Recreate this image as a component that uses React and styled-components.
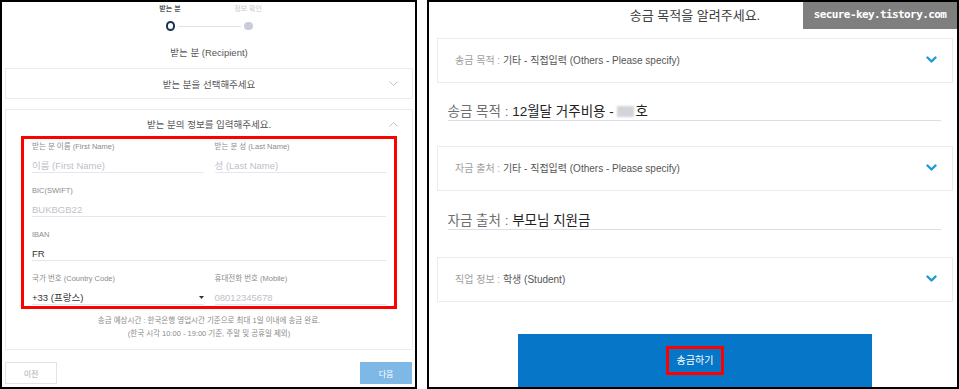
import styled, { createGlobalStyle } from 'styled-components';

const Global = createGlobalStyle`
  html, body { margin: 0; padding: 0; background: #fff; }
  body { font-family: "Liberation Sans", "Noto Sans CJK KR", sans-serif; }
  * { box-sizing: border-box; }
`;

const Page = styled.div`
  display: flex;
  gap: 10px;
  width: 959px;
  height: 389px;
`;

const Panel = styled.div`
  position: relative;
  width: ${p => p.$w}px;
  height: 389px;
  border: 2px solid #000;
  overflow: hidden;
  padding: ${p => p.$pad};
`;

/* ---------- left: stepper ---------- */
const StepLabels = styled.div`
  display: flex;
  justify-content: center;
  padding-top: 2px;
`;

const StepLabel = styled.div`
  width: 78px;
  text-align: center;
  font-size: 7px;
  line-height: 10px;
  font-weight: ${p => (p.$active ? 700 : 400)};
  color: ${p => (p.$active ? '#555' : '#c8c8d0')};
`;

const StepTrack = styled.div`
  display: flex;
  align-items: center;
  justify-content: center;
  gap: 3px;
  height: 10px;
  margin-top: 7px;
`;

const Dot = styled.div`
  width: ${p => (p.$active ? 9.5 : 8.5)}px;
  height: ${p => (p.$active ? 9.5 : 8.5)}px;
  border-radius: 50%;
  border: ${p => (p.$active ? '2px solid #1b3452' : 'none')};
  background: ${p => (p.$active ? '#fff' : '#c9ccdf')};
`;

const TrackLine = styled.div`
  width: 63px;
  height: 1px;
  background: #e2e2e8;
`;

const Heading = styled.div`
  margin-top: 15px;
  line-height: 14px;
  font-size: 9.5px;
  color: #555;
  text-align: center;
`;

/* ---------- left: cards ---------- */
const Card = styled.div`
  margin-top: ${p => p.$mt}px;
  border: 1px solid #ebebeb;
  background: #fff;
`;

const CardHeader = styled.div`
  display: grid;
  grid-template-columns: 30px 1fr 30px;
  align-items: center;
  height: ${p => p.$h}px;
  padding-top: ${p => p.$pt || 0}px;
  font-size: 9.5px;
  color: #555;
  text-align: center;

  svg { justify-self: end; margin-right: 14px; }
`;

const RedBox = styled.div`
  margin: 0 15px;
  border: 3px solid #ff0000;
  padding: 3px 8px 1px;
  display: grid;
  grid-template-columns: 1fr 1fr;
  gap: 13px 11px;
`;

const Field = styled.div`
  grid-column: ${p => (p.$wide ? 'span 2' : 'auto')};
`;

const FieldLabel = styled.div`
  font-size: 7.5px;
  line-height: 10px;
  color: #8c8c8c;
  white-space: nowrap;
`;

const FieldValue = styled.div`
  display: flex;
  align-items: center;
  justify-content: space-between;
  margin-top: 7px;
  height: 14px;
  line-height: 13px;
  font-size: 9.5px;
  color: ${p => (p.$filled ? '#333' : '#bfc0c8')};
  border-bottom: 1px solid #e6e6ee;
  white-space: nowrap;
`;

const Notice = styled.div`
  margin-top: 6px;
  padding-bottom: 9px;
  font-size: 7.5px;
  line-height: 12.6px;
  color: #8a8a8a;
  text-align: center;
`;

const NavRow = styled.div`
  display: flex;
  justify-content: space-between;
  margin-top: 12px;
  padding-right: 1px;
`;

const NavButton = styled.div`
  width: 52px;
  height: 22px;
  display: flex;
  align-items: center;
  justify-content: center;
  font-size: 8px;
  border: 1px solid ${p => (p.$primary ? '#7db8e6' : '#e3e3e3')};
  background: ${p => (p.$primary ? '#7db8e6' : '#fff')};
  color: ${p => (p.$primary ? '#fff' : '#aaa')};
`;

/* ---------- right panel ---------- */
const Watermark = styled.div`
  position: absolute;
  top: -2px;
  right: 0;
  width: 154px;
  height: 29px;
  background: #7f7f7f;
  color: #fff;
  display: flex;
  align-items: center;
  justify-content: center;
  font-family: "DejaVu Sans Mono", monospace;
  font-weight: 700;
  font-size: 11px;
  letter-spacing: -0.6px;
`;

const Title = styled.div`
  height: 36px;
  padding-top: 4px;
  line-height: 20px;
  font-size: 13px;
  color: #3d3d3d;
  text-align: center;
`;

const SelectCard = styled.div`
  margin-top: ${p => p.$mt}px;
  height: 45px;
  border: 1px solid #ebebeb;
  display: flex;
  align-items: center;
  justify-content: space-between;
  padding: 0 15px 3px 17px;
  font-size: 10px;
`;

const Muted = styled.span`
  color: ${p => p.$c};
`;

const InputRow = styled.div`
  margin: ${p => p.$mt}px 12px 0 10.5px;
  height: 17px;
  line-height: 16px;
  font-size: 13.5px;
  color: #222;
  border-bottom: 1px solid #dcdde8;
  white-space: nowrap;
`;

const Redacted = styled.span`
  display: inline-block;
  width: 17px;
  height: 11px;
  margin-right: 1px;
  vertical-align: -1px;
  background: #d3d4da;
  filter: blur(1px);
`;

const SendButton = styled.div`
  margin: 32px auto 0;
  width: 354px;
  height: 60px;
  background: #0677c8;
  display: flex;
  flex-direction: column;
  align-items: center;
  padding-top: 12px;
`;

const SendLabel = styled.div`
  border: 3px solid #ff0000;
  height: 29px;
  padding: 0 7.5px;
  line-height: 23px;
  font-size: 10px;
  color: #fff;
`;

const ThinChevron = ({ up }) => (
  <svg width="9" height="5" viewBox="0 0 9 5">
    <polyline
      points={up ? '0.5,4.5 4.5,0.5 8.5,4.5' : '0.5,0.5 4.5,4.5 8.5,0.5'}
      fill="none"
      stroke="#c4c4c4"
      strokeWidth="1"
    />
  </svg>
);

const BlueChevron = () => (
  <svg width="11" height="7" viewBox="0 0 11 7">
    <polyline points="1.5,1.5 5.5,5.5 9.5,1.5" fill="none" stroke="#1a9bd7" strokeWidth="2.4" strokeLinecap="round" strokeLinejoin="round" />
  </svg>
);

const Caret = () => (
  <svg width="5" height="3" viewBox="0 0 5 3">
    <polygon points="0,0 5,0 2.5,3" fill="#333" />
  </svg>
);

export default function App() {
  return (
    <>
      <Global />
      <Page>
        <Panel $w={417} $pad="0 2px 0 3px">
          <StepLabels>
            <StepLabel $active>받는 분</StepLabel>
            <StepLabel>정보 확인</StepLabel>
          </StepLabels>
          <StepTrack>
            <Dot $active />
            <TrackLine />
            <Dot />
          </StepTrack>
          <Heading>받는 분 (Recipient)</Heading>

          <Card $mt={8}>
            <CardHeader $h={29}>
              <span />
              <span>받는 분을 선택해주세요</span>
              <ThinChevron />
            </CardHeader>
          </Card>

          <Card $mt={10}>
            <CardHeader $h={26} $pt={2}>
              <span />
              <span>받는 분의 정보를 입력해주세요.</span>
              <ThinChevron up />
            </CardHeader>
            <RedBox>
              <Field>
                <FieldLabel>받는 분 이름 (First Name)</FieldLabel>
                <FieldValue>이름 (First Name)</FieldValue>
              </Field>
              <Field>
                <FieldLabel>받는 분 성 (Last Name)</FieldLabel>
                <FieldValue>성 (Last Name)</FieldValue>
              </Field>
              <Field $wide>
                <FieldLabel>BIC(SWIFT)</FieldLabel>
                <FieldValue>BUKBGB22</FieldValue>
              </Field>
              <Field $wide>
                <FieldLabel>IBAN</FieldLabel>
                <FieldValue $filled>FR</FieldValue>
              </Field>
              <Field>
                <FieldLabel>국가 번호 (Country Code)</FieldLabel>
                <FieldValue $filled>
                  <span>+33 (프랑스)</span>
                  <Caret />
                </FieldValue>
              </Field>
              <Field>
                <FieldLabel>휴대전화 번호 (Mobile)</FieldLabel>
                <FieldValue>08012345678</FieldValue>
              </Field>
            </RedBox>
            <Notice>
              송금 예상시간 : 한국은행 영업시간 기준으로 최대 1일 이내에 송금 완료.
              <br />
              (한국 시각 10:00 - 19:00 기준, 주말 및 공휴일 제외)
            </Notice>
          </Card>

          <NavRow>
            <NavButton>이전</NavButton>
            <NavButton $primary>다음</NavButton>
          </NavRow>
        </Panel>

        <Panel $w={532} $pad="0 4px 0 8px">
          <Watermark>secure-key.tistory.com</Watermark>
          <Title>송금 목적을 알려주세요.</Title>

          <SelectCard $mt={0}>
            <span>
              <Muted $c="#a0a0a0">송금 목적 : </Muted>
              <Muted $c="#555">기타 - 직접입력 (Others - Please specify)</Muted>
            </span>
            <BlueChevron />
          </SelectCard>
          <InputRow $mt={21}>
            <Muted $c="#6f6f6f">송금 목적 : </Muted>
            12월달 거주비용 - <Redacted />호
          </InputRow>

          <SelectCard $mt={25}>
            <span>
              <Muted $c="#a0a0a0">자금 출처 : </Muted>
              <Muted $c="#555">기타 - 직접입력 (Others - Please specify)</Muted>
            </span>
            <BlueChevron />
          </SelectCard>
          <InputRow $mt={22}>
            <Muted $c="#6f6f6f">자금 출처 : </Muted>
            부모님 지원금
          </InputRow>

          <SelectCard $mt={27}>
            <span>
              <Muted $c="#a0a0a0">직업 정보 : </Muted>
              <Muted $c="#555">학생 (Student)</Muted>
            </span>
            <BlueChevron />
          </SelectCard>

          <SendButton>
            <SendLabel>송금하기</SendLabel>
          </SendButton>
        </Panel>
      </Page>
    </>
  );
}
